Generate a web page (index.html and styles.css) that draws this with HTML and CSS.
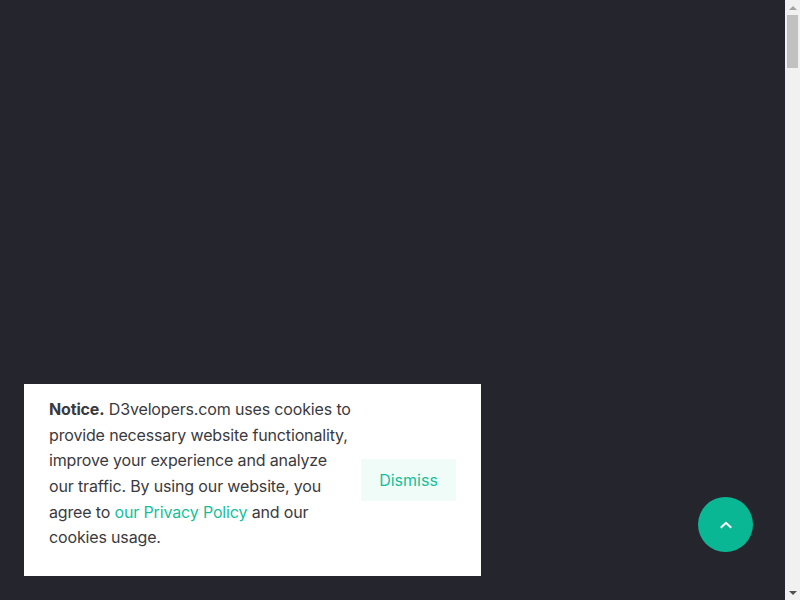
FILE: index.html
```html
<!DOCTYPE html>
<html lang="en">
<head>
<meta charset="utf-8">
<title>D3velopers</title>
<link rel="stylesheet" href="styles.css">
</head>
<body>
<main class="page"></main>
<div class="cookie">
  <p class="cookie-text"><strong>Notice.</strong> D3velopers.com uses cookies to provide necessary website functionality, improve your experience and analyze our traffic. By using our website, you agree to <a href="#" class="cookie-link">our Privacy Policy</a> and our cookies usage.</p>
  <button class="cookie-btn" type="button">Dismiss</button>
</div>
<a href="#" class="to-top" aria-label="Back to top">
  <svg width="14" height="14" viewBox="0 0 14 14" fill="none" stroke="#fff" stroke-width="2" stroke-linecap="square"><path d="M2.5 9 L7 4.8 L11.5 9"/></svg>
</a>
<div class="scrollbar" aria-hidden="true">
  <span class="sb-arrow sb-up"></span>
  <span class="sb-thumb"></span>
  <span class="sb-arrow sb-down"></span>
</div>
</body>
</html>
```
FILE: styles.css
```css
html, body {
  margin: 0;
  padding: 0;
  background: #25252e;
}
body {
  font-family: Inter, "Noto Sans", sans-serif;
}
.page {
  height: 6400px;
}
.cookie {
  position: fixed;
  left: 24px;
  bottom: 24px;
  width: 457px;
  height: 192px;
  box-sizing: border-box;
  padding: 0 25px;
  background: #fff;
  display: flex;
  align-items: center;
  justify-content: space-between;
}
.cookie-text {
  flex: none;
  width: 302px;
  margin: 0 0 12px;
  font-size: 16px;
  line-height: 25.6px;
  color: #3a3a3e;
  letter-spacing: -0.15px;
}
.cookie-text strong {
  font-weight: 700;
}
.cookie-link {
  color: #14bf99;
  text-decoration: none;
}
.cookie-btn {
  flex: none;
  width: 95px;
  height: 42px;
  border: 0;
  background: #effcf8;
  color: #14bf99;
  font-family: inherit;
  font-size: 16px;
  padding: 0;
}
.to-top {
  position: fixed;
  left: 698px;
  top: 497px;
  width: 55px;
  height: 55px;
  border-radius: 50%;
  background: #0ab795;
  display: flex;
  align-items: center;
  justify-content: center;
}
.scrollbar {
  position: fixed;
  top: 0;
  right: 0;
  width: 15px;
  height: 600px;
  background: #f1f1f1;
  display: flex;
  flex-direction: column;
  align-items: center;
}
.sb-arrow {
  width: 15px;
  height: 15px;
  display: flex;
  align-items: center;
  justify-content: center;
  position: relative;
}
.sb-arrow::after {
  content: "";
  width: 0;
  height: 0;
  border-left: 4px solid transparent;
  border-right: 4px solid transparent;
}
.sb-up::after {
  border-bottom: 4px solid #a3a3a3;
}
.sb-down {
  margin-top: auto;
}
.sb-down::after {
  border-top: 4px solid #505050;
}
.sb-thumb {
  width: 11px;
  height: 53px;
  background: #c1c1c1;
}
```
